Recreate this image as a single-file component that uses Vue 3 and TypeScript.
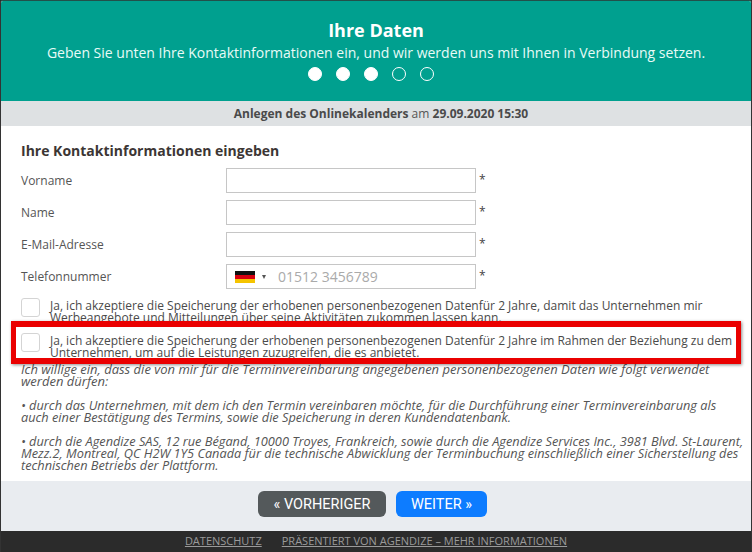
<template>
  <div class="widget">
    <header class="head">
      <h1>Ihre Daten</h1>
      <p>Geben Sie unten Ihre Kontaktinformationen ein, und wir werden uns mit Ihnen in Verbindung setzen.</p>
      <div class="steps">
        <span v-for="n in 5" :key="n" :class="['dot', { done: n <= 3 }]"></span>
      </div>
    </header>
    <div class="sub"><b>Anlegen des Onlinekalenders</b> am <b>29.09.2020 15:30</b></div>

    <main class="body">
      <h2>Ihre Kontaktinformationen eingeben</h2>
      <div class="fields">
        <div v-for="f in fields" :key="f" class="row">
          <label>{{ f }}</label>
          <div class="input"></div>
          <span class="star">*</span>
        </div>
        <div class="row">
          <label>Telefonnummer</label>
          <div class="input phone">
            <svg class="flag" width="20" height="12" viewBox="0 0 20 12">
              <rect width="20" height="4" fill="#111" />
              <rect y="4" width="20" height="4" fill="#d8000f" />
              <rect y="8" width="20" height="4" fill="#f5c400" />
            </svg>
            <span class="caret"></span>
            <span class="ph">01512 3456789</span>
          </div>
          <span class="star">*</span>
        </div>
      </div>

      <div class="consents">
        <div class="consent">
          <span class="check"></span>
          <p>Ja, ich akzeptiere die Speicherung der erhobenen personenbezogenen Datenfür 2 Jahre, damit das Unternehmen mir Werbeangebote und Mitteilungen über seine Aktivitäten zukommen lassen kann.</p>
        </div>
        <div class="consent second">
          <span class="check"></span>
          <p>Ja, ich akzeptiere die Speicherung der erhobenen personenbezogenen Datenfür 2 Jahre im Rahmen der Beziehung zu dem Unternehmen, um auf die Leistungen zuzugreifen, die es anbietet.</p>
          <div class="mark"></div>
        </div>
      </div>

      <div class="legal">
        <p>Ich willige ein, dass die von mir für die Terminvereinbarung angegebenen personenbezogenen Daten wie folgt verwendet<br>werden dürfen:</p>
        <p>• durch das Unternehmen, mit dem ich den Termin vereinbaren möchte, für die Durchführung einer Terminvereinbarung als<br>auch einer Bestätigung des Termins, sowie die Speicherung in deren Kundendatenbank.</p>
        <p>• durch die Agendize SAS, 12 rue Bégand, 10000 Troyes, Frankreich, sowie durch die Agendize Services Inc., 3981 Blvd. St-Laurent,<br>Mezz.2, Montreal, QC H2W 1Y5 Canada für die technische Abwicklung der Terminbuchung einschließlich einer Sicherstellung des<br>technischen Betriebs der Plattform.</p>
      </div>
    </main>

    <div class="actions">
      <button class="btn prev">« VORHERIGER</button>
      <button class="btn next">WEITER »</button>
    </div>
    <footer class="foot">
      <a>DATENSCHUTZ</a>
      <a>PRÄSENTIERT VON AGENDIZE – MEHR INFORMATIONEN</a>
    </footer>
  </div>
</template>

<script setup lang="ts">
const fields: string[] = ['Vorname', 'Name', 'E-Mail-Adresse']
</script>

<style>
html, body {
  margin: 0;
  background: #2b2b2b;
}
</style>

<style scoped>
.widget {
  width: 752px;
  height: 552px;
  box-sizing: border-box;
  display: flex;
  flex-direction: column;
  overflow: hidden;
  background: #fff;
  border-left: 1px solid #333;
  border-right: 1px solid #333;
  border-top: 1px solid #22504a;
  border-radius: 3px 3px 0 0;
  font-family: "Open Sans", sans-serif;
  color: #444;
}

.head {
  height: 100px;
  flex-shrink: 0;
  box-sizing: border-box;
  padding-top: 18px;
  background: #00a08f;
  color: #fff;
  text-align: center;
}
.head h1 {
  margin: 0;
  font-size: 18px;
  line-height: 23px;
  font-weight: 700;
}
.head p {
  margin: 1px 0 0;
  font-size: 14px;
  line-height: 20px;
  color: #e8fbf7;
}
.steps {
  display: flex;
  justify-content: center;
  gap: 14px;
  margin-top: 4px;
  padding-right: 10px;
}
.dot {
  width: 14px;
  height: 14px;
  box-sizing: border-box;
  border: 1px solid #fff;
  border-radius: 50%;
}
.dot.done {
  background: #fff;
}

.sub {
  height: 25px;
  flex-shrink: 0;
  padding-left: 10px;
  background: #dee1e3;
  text-align: center;
  font-size: 12px;
  line-height: 25px;
  color: #555;
}
.sub b {
  font-weight: 700;
  color: #4a4a4a;
}

.body {
  flex: 1;
  padding: 15px 10px 0 20px;
  min-height: 0;
}
.body h2 {
  margin: 0 0 7px;
  font-size: 14px;
  line-height: 20px;
  font-weight: 700;
  color: #3c3634;
}
.fields {
  display: flex;
  flex-direction: column;
  gap: 7px;
}
.row {
  display: flex;
  align-items: center;
  height: 25px;
}
.row label {
  width: 205px;
  font-size: 12px;
  color: #555;
}
.input {
  width: 250px;
  height: 25px;
  box-sizing: border-box;
  border: 1px solid #c6c6c6;
  background: #fff;
}
.star {
  margin: -2px 0 0 3px;
  font-size: 12px;
  color: #444;
}
.phone {
  display: flex;
  align-items: center;
  padding-left: 8px;
}
.caret {
  margin-left: 7px;
  width: 0;
  height: 0;
  border-left: 2.5px solid transparent;
  border-right: 2.5px solid transparent;
  border-top: 4px solid #555;
}
.ph {
  margin-left: 12px;
  font-size: 14px;
  color: #aaa;
}

.consents {
  margin-top: 9px;
}
.consent {
  position: relative;
  display: flex;
  height: 35px;
}
.check {
  flex-shrink: 0;
  width: 17px;
  height: 17px;
  border: 1px solid #d4d4d4;
  border-radius: 3px;
  background: #fff;
}
.consent p {
  margin: 2px 0 0 10px;
  width: 690px;
  font-size: 12px;
  line-height: 12px;
  color: #4a4a4a;
}
.mark {
  position: absolute;
  left: -10px;
  top: -12px;
  width: 730px;
  height: 43px;
  box-sizing: border-box;
  border: solid #ea0000;
  border-width: 6px 5px;
  box-shadow: 1px 1px 3px rgba(0, 0, 0, 0.45);
  pointer-events: none;
}

.legal {
  margin-top: -5px;
}
.legal p {
  margin: 0 0 12px;
  font-size: 12.75px;
  line-height: 12px;
  font-style: italic;
  white-space: nowrap;
  color: #555;
}
.legal p:first-child {
  font-size: 13px;
}

.actions {
  height: 50px;
  flex-shrink: 0;
  display: flex;
  justify-content: center;
  gap: 10px;
  padding: 10px 7px 0 0;
  box-sizing: border-box;
  background: #e9ecf0;
}
.btn {
  height: 26px;
  border: 0;
  border-radius: 6px;
  font-family: Roboto, sans-serif;
  font-size: 14.5px;
  padding: 0;
  white-space: nowrap;
}
.prev {
  width: 128px;
  background: #54595b;
  color: #fff;
}
.next {
  width: 91px;
  background: #0d7cff;
  color: #fff;
}

.foot {
  height: 21px;
  flex-shrink: 0;
  display: flex;
  justify-content: center;
  gap: 20px;
  background: #2b2b2b;
  margin: 0 -1px;
  font-size: 11px;
  line-height: 20px;
}
.foot a {
  color: #9a9a9a;
  text-decoration: underline;
}
</style>
